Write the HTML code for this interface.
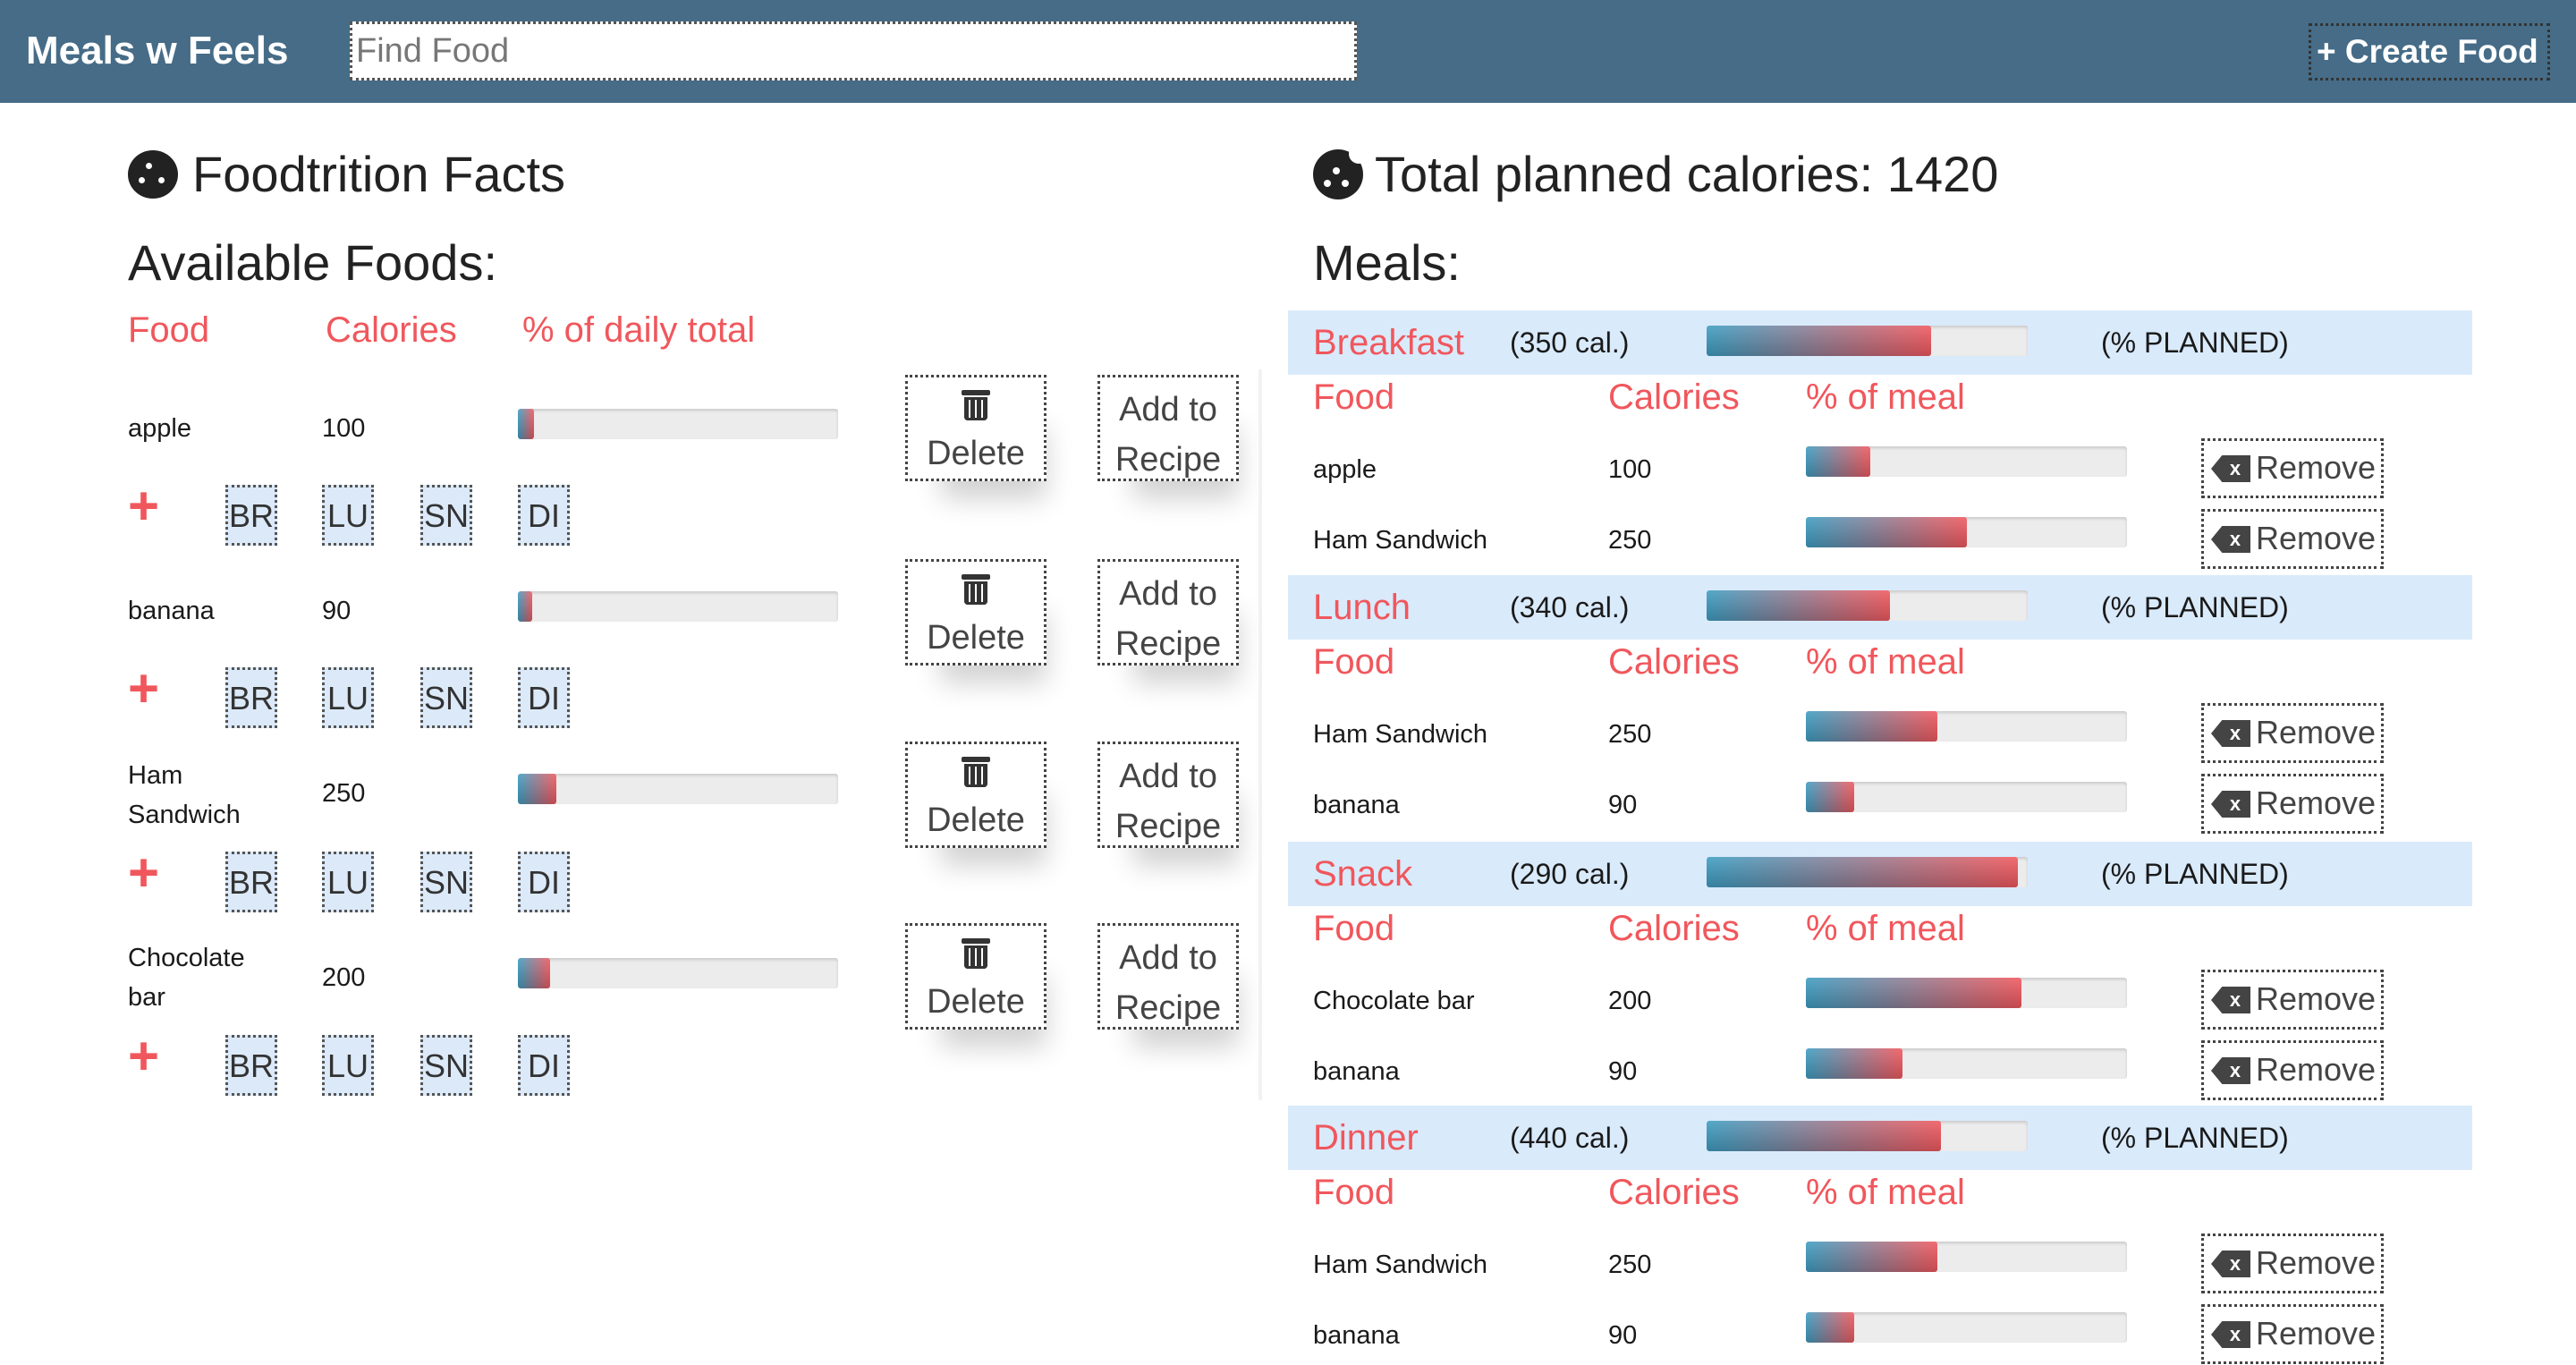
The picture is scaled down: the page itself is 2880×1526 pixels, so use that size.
<!DOCTYPE html>
<html><head><meta charset="utf-8"><style>
*{margin:0;padding:0;box-sizing:border-box}
body{width:2880px;height:1526px;overflow:hidden;background:#fff;font-family:"Liberation Sans",sans-serif;color:#222;position:relative}
.a{position:absolute;white-space:nowrap}
.nav{left:0;top:0;width:2880px;height:115px;background:#466c87}
.h1{font-size:56px;line-height:60px;color:#222}
.red{color:#f0575c}
.ch{font-size:40px;line-height:44px}
.t{font-size:29px;line-height:36px;color:#1a1a1a}
.bar{height:34px;background:#ececec;border-radius:3px;box-shadow:inset 0 2px 3px rgba(0,0,0,.15);overflow:hidden}
.fill{height:100%;background:linear-gradient(to bottom,rgba(255,255,255,.12),rgba(0,0,0,.18)),linear-gradient(to right,#3d9dc2,#f0585e);border-radius:3px}
.tag{width:58px;height:68px;background:#dbe9f8;border:3px dotted #555;font-size:36px;line-height:64px;text-align:center;color:#333}
.plus{font-size:60px;line-height:60px;color:#f0575c;font-weight:bold}
.btn{width:158px;height:119px;border:3px dotted #444;font-size:38px;color:#444;text-align:center;background:#fff;box-shadow:20px 40px 30px -20px rgba(0,0,0,.18)}
.btn.d{padding-top:62px;line-height:46px}
.trash{position:absolute;left:63px;top:14px;width:26px;height:34px}
.trash:before{content:"";position:absolute;left:-3px;top:0;width:32px;height:6px;background:#333;border-radius:2px}
.trash:after{content:"";position:absolute;left:0;top:8px;width:26px;height:26px;background:repeating-linear-gradient(to right,#333 0 5px,#fff 5px 7px);border:0;border-radius:0 0 4px 4px;box-shadow:inset 0 0 0 3px #333}
.band{left:1440px;width:1324px;height:72px;background:#d9eafb}
.rm{width:204px;height:67px;border:3px dotted #444;font-size:36px;line-height:60px;color:#444;padding-left:58px}
.rm i{position:absolute;left:8px;top:16px;width:44px;height:30px;background:#444;clip-path:polygon(28% 0,100% 0,100% 100%,28% 100%,0 50%);color:#fff;font-style:normal;font-size:22px;line-height:30px;text-align:center;padding-left:10px;font-weight:bold}
</style></head><body>
<div class="a nav"></div>
<div class="a" style="left:29px;top:30px;font-size:44px;line-height:54px;color:#fff;font-weight:bold">Meals w Feels</div>
<div class="a" style="left:391px;top:24px;width:1126px;height:66px;background:#fff;border:3px dotted #555;font-size:38px;line-height:60px;color:#777;padding-left:4px">Find Food</div>
<div class="a" style="left:2581px;top:26px;width:270px;height:64px;border:3px dotted #333;color:#fff;font-size:37px;line-height:58px;font-weight:bold;padding-left:6px">+ Create Food</div>

<!-- left -->
<div class="a" style="left:143px;top:168px;width:56px;height:54px;border-radius:50%;background:#222"><span class="a" style="left:20px;top:14px;width:7px;height:7px;border-radius:50%;background:#fff"></span><span class="a" style="left:12px;top:30px;width:7px;height:7px;border-radius:50%;background:#fff"></span><span class="a" style="left:34px;top:30px;width:7px;height:7px;border-radius:50%;background:#fff"></span></div>
<div class="a h1" style="left:215px;top:165px">Foodtrition Facts</div>
<div class="a h1" style="left:143px;top:264px">Available Foods:</div>
<div class="a ch red" style="left:143px;top:347px">Food</div>
<div class="a ch red" style="left:364px;top:347px">Calories</div>
<div class="a ch red" style="left:584px;top:347px">% of daily total</div>

<div class="a t" style="left:143px;top:461px">apple</div><div class="a t" style="left:360px;top:461px">100</div>
<div class="a bar" style="left:579px;top:457px;width:358px"><div class="fill" style="width:5%"></div></div>
<div class="a t" style="left:143px;top:665px">banana</div><div class="a t" style="left:360px;top:665px">90</div>
<div class="a bar" style="left:579px;top:661px;width:358px"><div class="fill" style="width:4.5%"></div></div>
<div class="a t" style="left:143px;top:849px">Ham</div><div class="a t" style="left:143px;top:893px">Sandwich</div><div class="a t" style="left:360px;top:869px">250</div>
<div class="a bar" style="left:579px;top:865px;width:358px"><div class="fill" style="width:12%"></div></div>
<div class="a t" style="left:143px;top:1053px">Chocolate</div><div class="a t" style="left:143px;top:1097px">bar</div><div class="a t" style="left:360px;top:1075px">200</div>
<div class="a bar" style="left:579px;top:1071px;width:358px"><div class="fill" style="width:10%"></div></div>

<div class="a plus" style="left:143px;top:536px">+</div>
<div class="a tag" style="left:252px;top:542px">BR</div><div class="a tag" style="left:360px;top:542px">LU</div><div class="a tag" style="left:470px;top:542px">SN</div><div class="a tag" style="left:579px;top:542px">DI</div>
<div class="a plus" style="left:143px;top:740px">+</div>
<div class="a tag" style="left:252px;top:746px">BR</div><div class="a tag" style="left:360px;top:746px">LU</div><div class="a tag" style="left:470px;top:746px">SN</div><div class="a tag" style="left:579px;top:746px">DI</div>
<div class="a plus" style="left:143px;top:946px">+</div>
<div class="a tag" style="left:252px;top:952px">BR</div><div class="a tag" style="left:360px;top:952px">LU</div><div class="a tag" style="left:470px;top:952px">SN</div><div class="a tag" style="left:579px;top:952px">DI</div>
<div class="a plus" style="left:143px;top:1151px">+</div>
<div class="a tag" style="left:252px;top:1157px">BR</div><div class="a tag" style="left:360px;top:1157px">LU</div><div class="a tag" style="left:470px;top:1157px">SN</div><div class="a tag" style="left:579px;top:1157px">DI</div>

<div class="a btn d" style="left:1012px;top:419px"><span class="trash"></span>Delete</div>
<div class="a btn" style="left:1227px;top:419px;padding-top:8px;line-height:56px">Add to<br>Recipe</div>
<div class="a btn d" style="left:1012px;top:625px"><span class="trash"></span>Delete</div>
<div class="a btn" style="left:1227px;top:625px;padding-top:8px;line-height:56px">Add to<br>Recipe</div>
<div class="a btn d" style="left:1012px;top:829px"><span class="trash"></span>Delete</div>
<div class="a btn" style="left:1227px;top:829px;padding-top:8px;line-height:56px">Add to<br>Recipe</div>
<div class="a btn d" style="left:1012px;top:1032px"><span class="trash"></span>Delete</div>
<div class="a btn" style="left:1227px;top:1032px;padding-top:8px;line-height:56px">Add to<br>Recipe</div>
<div class="a" style="left:1407px;top:413px;width:4px;height:817px;background:#f2f2f2"></div>

<!-- right -->
<div class="a" style="left:1468px;top:167px;width:56px;height:56px;border-radius:50%;background:#222"><span class="a" style="left:40px;top:-6px;width:22px;height:22px;border-radius:50%;background:#fff"></span><span class="a" style="left:22px;top:20px;width:8px;height:8px;border-radius:50%;background:#fff"></span><span class="a" style="left:12px;top:34px;width:8px;height:8px;border-radius:50%;background:#fff"></span><span class="a" style="left:32px;top:34px;width:8px;height:8px;border-radius:50%;background:#fff"></span></div>
<div class="a h1" style="left:1537px;top:165px">Total planned calories: 1420</div>
<div class="a h1" style="left:1468px;top:264px">Meals:</div>

<!-- Breakfast -->
<div class="a band" style="top:347px"></div>
<div class="a ch red" style="left:1468px;top:361px">Breakfast</div>
<div class="a t" style="left:1688px;top:365px;font-size:32px">(350 cal.)</div>
<div class="a bar" style="left:1908px;top:364px;width:359px"><div class="fill" style="width:70%"></div></div>
<div class="a t" style="left:2349px;top:365px;font-size:32px">(% PLANNED)</div>
<div class="a ch red" style="left:1468px;top:422px">Food</div><div class="a ch red" style="left:1798px;top:422px">Calories</div><div class="a ch red" style="left:2019px;top:422px">% of meal</div>
<div class="a t" style="left:1468px;top:507px">apple</div><div class="a t" style="left:1798px;top:507px">100</div>
<div class="a bar" style="left:2019px;top:499px;width:359px"><div class="fill" style="width:20%"></div></div>
<div class="a rm" style="left:2461px;top:490px"><i>x</i>Remove</div>
<div class="a t" style="left:1468px;top:586px">Ham Sandwich</div><div class="a t" style="left:1798px;top:586px">250</div>
<div class="a bar" style="left:2019px;top:578px;width:359px"><div class="fill" style="width:50%"></div></div>
<div class="a rm" style="left:2461px;top:569px"><i>x</i>Remove</div>

<!-- Lunch -->
<div class="a band" style="top:643px"></div>
<div class="a ch red" style="left:1468px;top:657px">Lunch</div>
<div class="a t" style="left:1688px;top:661px;font-size:32px">(340 cal.)</div>
<div class="a bar" style="left:1908px;top:660px;width:359px"><div class="fill" style="width:57%"></div></div>
<div class="a t" style="left:2349px;top:661px;font-size:32px">(% PLANNED)</div>
<div class="a ch red" style="left:1468px;top:718px">Food</div><div class="a ch red" style="left:1798px;top:718px">Calories</div><div class="a ch red" style="left:2019px;top:718px">% of meal</div>
<div class="a t" style="left:1468px;top:803px">Ham Sandwich</div><div class="a t" style="left:1798px;top:803px">250</div>
<div class="a bar" style="left:2019px;top:795px;width:359px"><div class="fill" style="width:41%"></div></div>
<div class="a rm" style="left:2461px;top:786px"><i>x</i>Remove</div>
<div class="a t" style="left:1468px;top:882px">banana</div><div class="a t" style="left:1798px;top:882px">90</div>
<div class="a bar" style="left:2019px;top:874px;width:359px"><div class="fill" style="width:15%"></div></div>
<div class="a rm" style="left:2461px;top:865px"><i>x</i>Remove</div>

<!-- Snack -->
<div class="a band" style="top:941px"></div>
<div class="a ch red" style="left:1468px;top:955px">Snack</div>
<div class="a t" style="left:1688px;top:959px;font-size:32px">(290 cal.)</div>
<div class="a bar" style="left:1908px;top:958px;width:359px"><div class="fill" style="width:97%"></div></div>
<div class="a t" style="left:2349px;top:959px;font-size:32px">(% PLANNED)</div>
<div class="a ch red" style="left:1468px;top:1016px">Food</div><div class="a ch red" style="left:1798px;top:1016px">Calories</div><div class="a ch red" style="left:2019px;top:1016px">% of meal</div>
<div class="a t" style="left:1468px;top:1101px">Chocolate bar</div><div class="a t" style="left:1798px;top:1101px">200</div>
<div class="a bar" style="left:2019px;top:1093px;width:359px"><div class="fill" style="width:67%"></div></div>
<div class="a rm" style="left:2461px;top:1084px"><i>x</i>Remove</div>
<div class="a t" style="left:1468px;top:1180px">banana</div><div class="a t" style="left:1798px;top:1180px">90</div>
<div class="a bar" style="left:2019px;top:1172px;width:359px"><div class="fill" style="width:30%"></div></div>
<div class="a rm" style="left:2461px;top:1163px"><i>x</i>Remove</div>

<!-- Dinner -->
<div class="a band" style="top:1236px"></div>
<div class="a ch red" style="left:1468px;top:1250px">Dinner</div>
<div class="a t" style="left:1688px;top:1254px;font-size:32px">(440 cal.)</div>
<div class="a bar" style="left:1908px;top:1253px;width:359px"><div class="fill" style="width:73%"></div></div>
<div class="a t" style="left:2349px;top:1254px;font-size:32px">(% PLANNED)</div>
<div class="a ch red" style="left:1468px;top:1311px">Food</div><div class="a ch red" style="left:1798px;top:1311px">Calories</div><div class="a ch red" style="left:2019px;top:1311px">% of meal</div>
<div class="a t" style="left:1468px;top:1396px">Ham Sandwich</div><div class="a t" style="left:1798px;top:1396px">250</div>
<div class="a bar" style="left:2019px;top:1388px;width:359px"><div class="fill" style="width:41%"></div></div>
<div class="a rm" style="left:2461px;top:1379px"><i>x</i>Remove</div>
<div class="a t" style="left:1468px;top:1475px">banana</div><div class="a t" style="left:1798px;top:1475px">90</div>
<div class="a bar" style="left:2019px;top:1467px;width:359px"><div class="fill" style="width:15%"></div></div>
<div class="a rm" style="left:2461px;top:1458px"><i>x</i>Remove</div>
</body></html>
